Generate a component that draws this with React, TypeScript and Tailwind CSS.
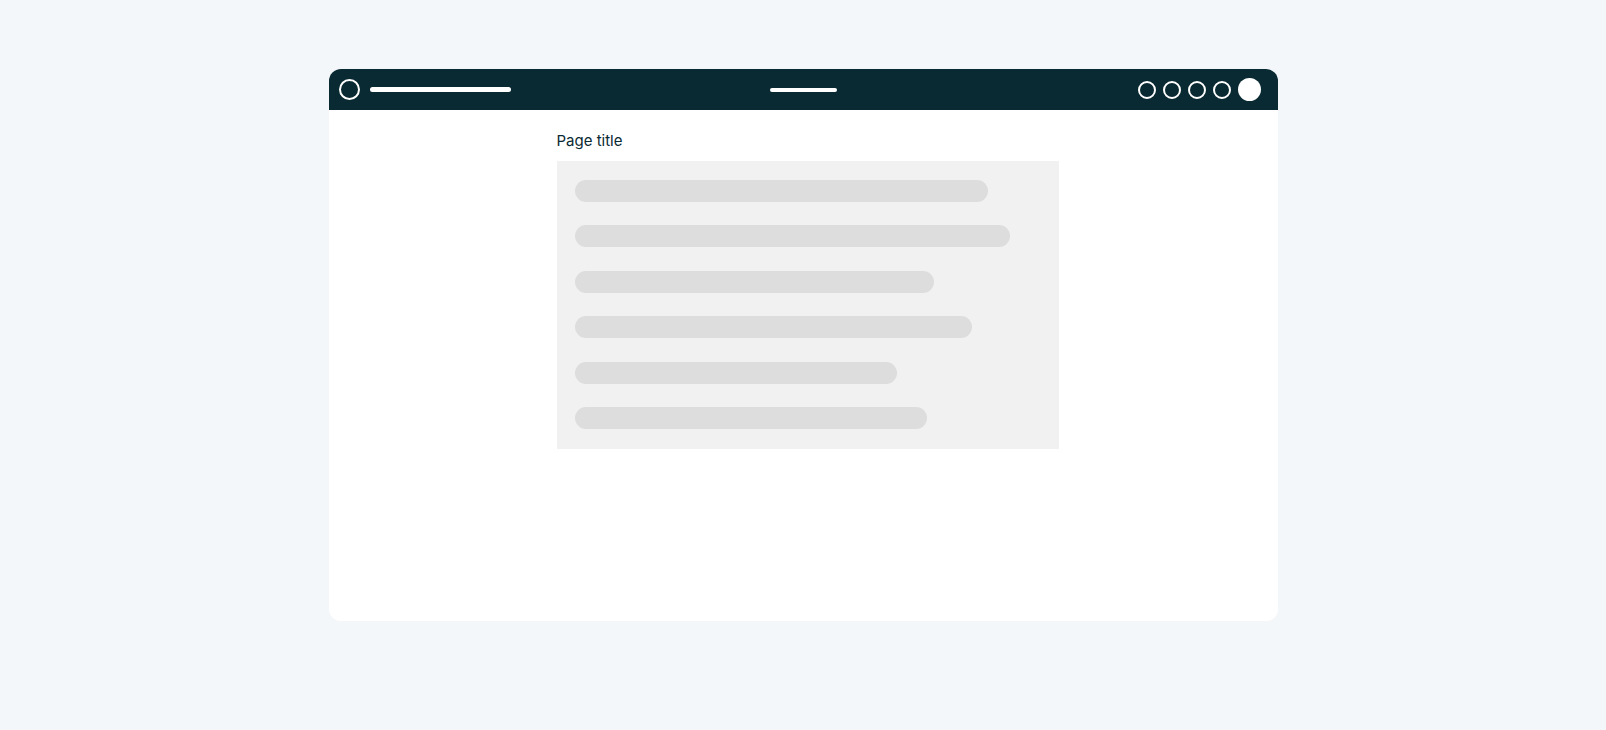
const barWidths = [413, 435, 359, 397, 322, 352];

function Ring({ size = 18 }: { size?: number }) {
  return (
    <span
      className="block shrink-0 rounded-full border-2 border-white"
      style={{ width: size, height: size }}
    />
  );
}

function TopBar() {
  return (
    <header className="grid h-[41px] grid-cols-[1fr_auto_1fr] items-center bg-[#0a2a33] px-[10px]">
      <div className="flex items-center gap-[10px]">
        <span className="block h-[21px] w-[21px] rounded-full border-2 border-white" />
        <span className="block h-[5px] w-[141px] rounded-full bg-white" />
      </div>
      <span className="block h-[4px] w-[67px] rounded-full bg-white" />
      <div className="flex items-center justify-end gap-[6.8px] pr-[7px]">
        <Ring />
        <Ring />
        <Ring />
        <Ring />
        <span className="block h-[23px] w-[23px] rounded-full bg-white" />
      </div>
    </header>
  );
}

export default function App() {
  return (
    <div className="min-h-[730px] w-full bg-[#f3f7fa] pt-[69px] font-['Inter',sans-serif]">
      <div className="mx-auto h-[552px] w-[949px] overflow-hidden rounded-xl bg-white">
        <TopBar />
        <main className="ml-[228px] w-[502px] pt-[21px]">
          <h1 className="mb-[10px] text-[15px] leading-[20px] text-[#0a2a33]">Page title</h1>
          <div className="flex h-[288px] flex-col gap-[23.4px] bg-[#f1f1f1] pl-[18px] pt-[19px]">
            {barWidths.map((w, i) => (
              <div key={i} className="h-[22px] shrink-0 rounded-full bg-[#dddddd]" style={{ width: w }} />
            ))}
          </div>
        </main>
      </div>
    </div>
  );
}
